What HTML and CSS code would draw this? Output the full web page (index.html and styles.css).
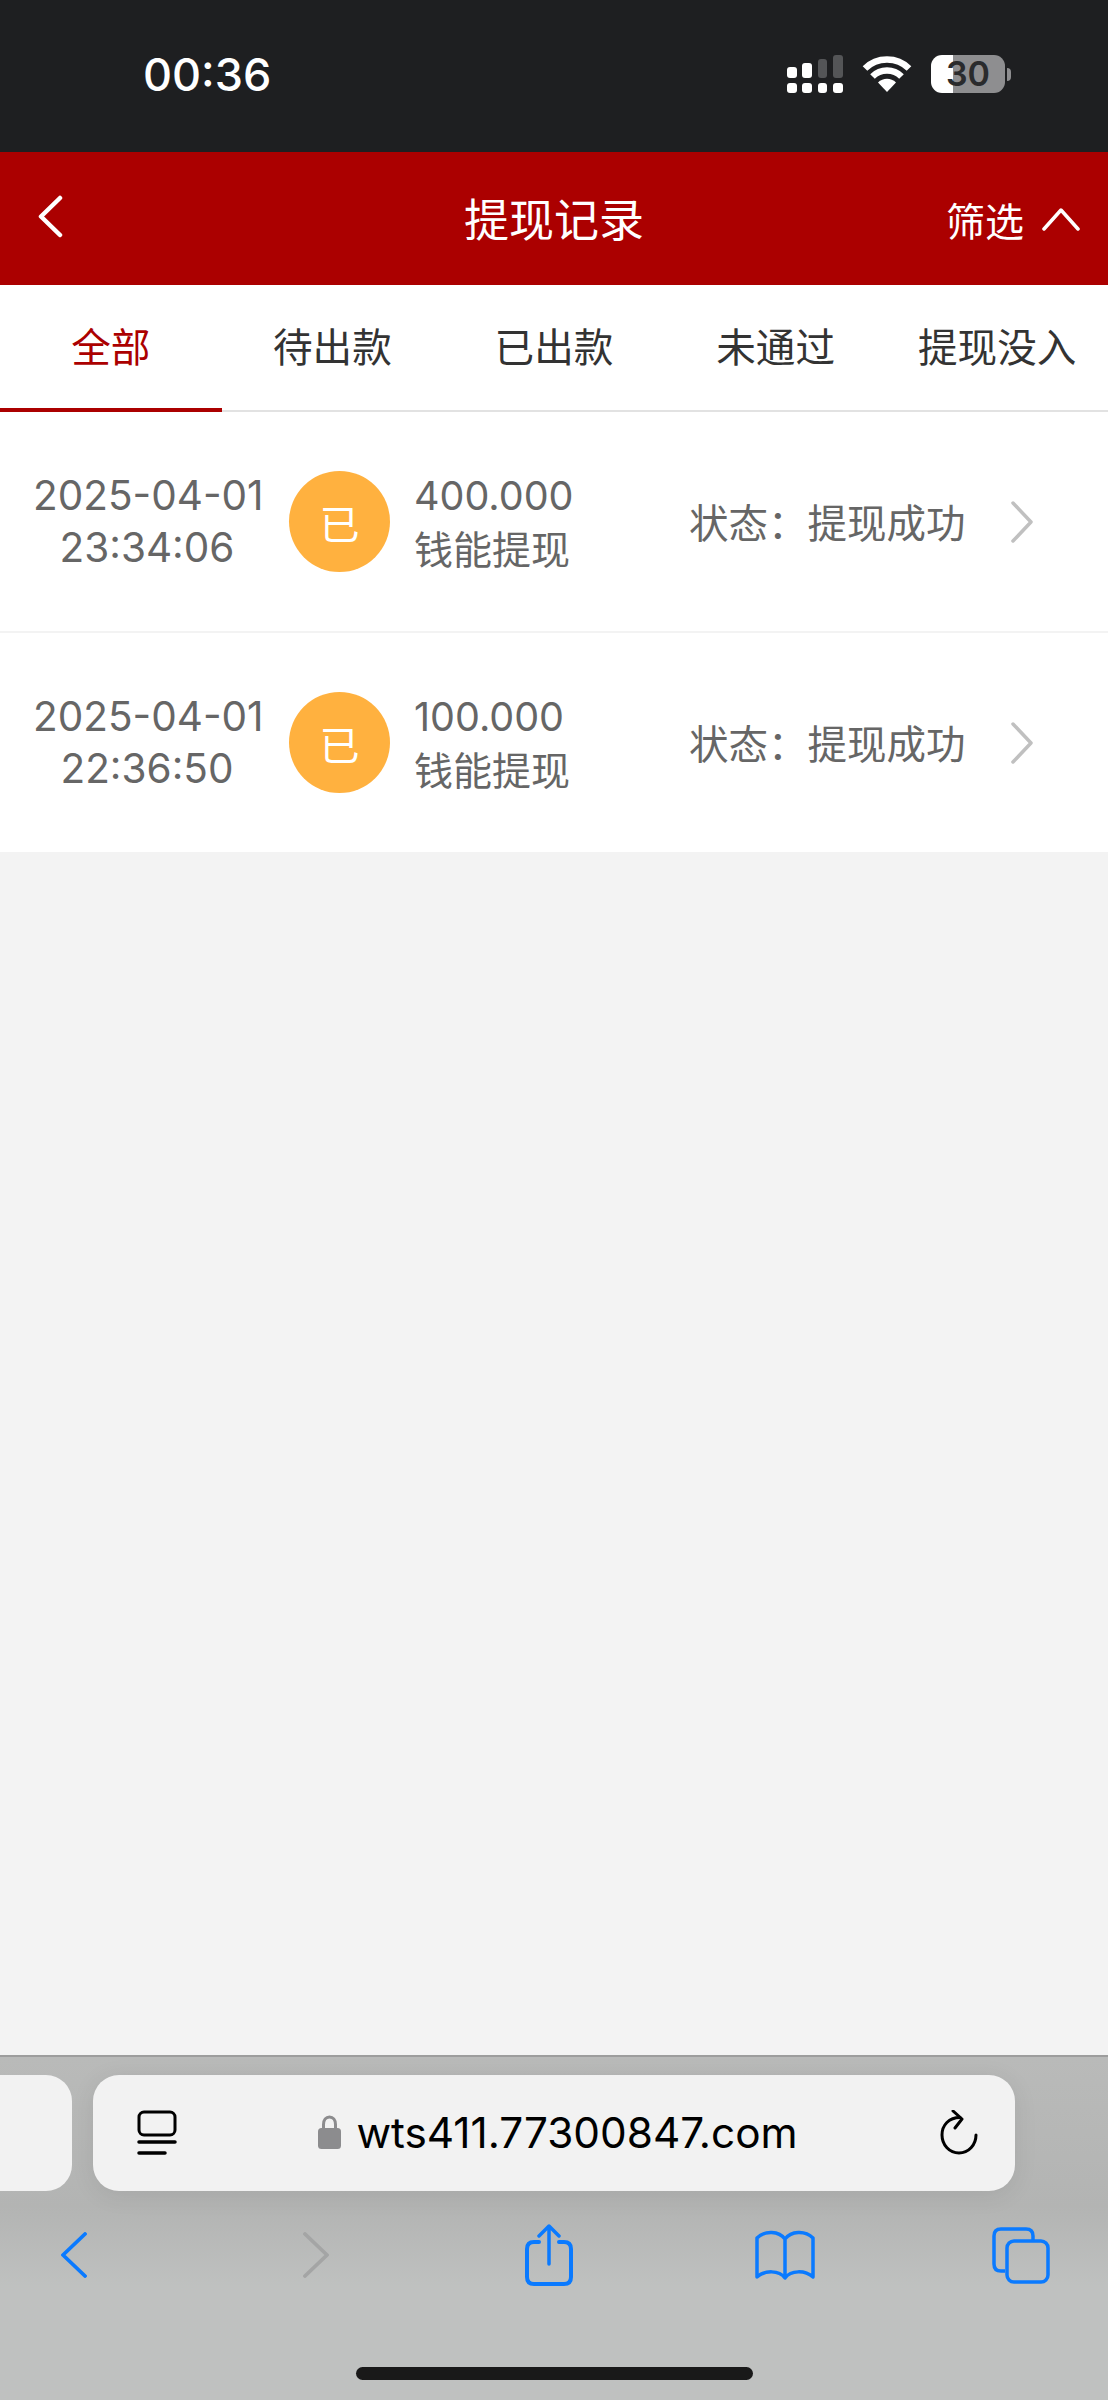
FILE: index.html
```html
<!DOCTYPE html>
<html lang="zh">
<head>
<meta charset="utf-8">
<title>提现记录</title>
<link rel="stylesheet" href="styles.css">
</head>
<body>
<div class="screen">
  <div class="status">
    <span class="clock">00:36</span>
    <div class="status-icons">
      <svg class="signal" width="56" height="38" viewBox="0 0 56 38">
        <g fill="#fff"><rect x="0" y="12" width="10" height="11" rx="3"/><rect x="15" y="8" width="10" height="15" rx="3"/></g>
        <g fill="#545557"><rect x="31" y="4" width="9" height="19" rx="3"/><rect x="46" y="0" width="10" height="23" rx="3"/></g>
        <g fill="#fff"><rect x="0" y="28" width="10" height="10" rx="3"/><rect x="15" y="28" width="10" height="10" rx="3"/><rect x="31" y="28" width="9" height="10" rx="3"/><rect x="46" y="28" width="10" height="10" rx="3"/></g>
      </svg>
      <svg class="wifi" width="50" height="38" viewBox="0 0 50 38">
        <path d="M25 37 16 27.500C21 22.500 29 22.500 34 27.500Z" fill="#fff"/>
        <path d="M10.500 21.500C18.500 13.500 31.500 13.500 39.500 21.500" fill="none" stroke="#fff" stroke-width="6.500"/>
        <path d="M3 13.500C15 1.500 35 1.500 47 13.500" fill="none" stroke="#fff" stroke-width="6.500"/>
      </svg>
      <div class="battery">
        <div class="battery-body"><span class="battery-num">30</span></div>
        <span class="battery-cap"></span>
      </div>
    </div>
  </div>

  <header class="navbar">
    <svg class="nav-back" width="30" height="44" viewBox="0 0 30 44"><path d="M24 3 5 21.500 24 40" fill="none" stroke="#fff" stroke-width="4.500" stroke-linecap="round" stroke-linejoin="round"/></svg>
    <h1 class="nav-title">提现记录</h1>
    <div class="nav-filter">
      <span>筛选</span>
      <svg width="38" height="24" viewBox="0 0 38 24"><path d="M2 22 19 3 36 22" fill="none" stroke="#fff" stroke-width="3.500" stroke-linecap="round" stroke-linejoin="round"/></svg>
    </div>
  </header>

  <nav class="tabs">
    <a class="tab active">全部</a>
    <a class="tab">待出款</a>
    <a class="tab">已出款</a>
    <a class="tab">未通过</a>
    <a class="tab">提现没入</a>
  </nav>

  <section class="list">
    <article class="row">
      <div class="when"><div>2025-04-01</div><div>23:34:06</div></div>
      <div class="badge">已</div>
      <div class="info"><div class="amount">400.000</div><div>钱能提现</div></div>
      <div class="state">状态：提现成功</div>
      <svg class="chev" width="24" height="42" viewBox="0 0 24 42"><path d="M3 2 21 21 3 40" fill="none" stroke="#c0c0c0" stroke-width="3.500" stroke-linecap="round" stroke-linejoin="round"/></svg>
    </article>
    <article class="row">
      <div class="when"><div>2025-04-01</div><div>22:36:50</div></div>
      <div class="badge">已</div>
      <div class="info"><div class="amount">100.000</div><div>钱能提现</div></div>
      <div class="state">状态：提现成功</div>
      <svg class="chev" width="24" height="42" viewBox="0 0 24 42"><path d="M3 2 21 21 3 40" fill="none" stroke="#c0c0c0" stroke-width="3.500" stroke-linecap="round" stroke-linejoin="round"/></svg>
    </article>
  </section>

  <div class="spacer"></div>

  <div class="safari">
    <div class="url-row">
      <div class="pill-prev"></div>
      <div class="pill">
        <svg class="reader" width="40" height="46" viewBox="0 0 40 46">
          <rect x="2" y="2" width="36" height="23" rx="5" fill="none" stroke="#000" stroke-width="3"/>
          <path d="M2 33H38M2 44H28" stroke="#000" stroke-width="3.500" stroke-linecap="round" transform="translate(0,-1)"/>
        </svg>
        <div class="address">
          <svg width="23" height="34" viewBox="0 0 23 34">
            <path d="M5.500 15V9.500C5.500 5 8 2 11.500 2S17.500 5 17.500 9.500V15" fill="none" stroke="#8c8c8e" stroke-width="3"/>
            <rect x="0" y="13" width="23" height="21" rx="3.500" fill="#8c8c8e"/>
          </svg>
          <span class="domain">wts411.77300847.com</span>
        </div>
        <svg class="reload" width="40" height="46" viewBox="0 0 40 46">
          <path d="M21 7.500C10 7.500 3 15 3 25S10.500 43 20 43 37 35 37 25" fill="none" stroke="#000" stroke-width="3" stroke-linecap="round"/>
          <path d="M14 1 23 9 16 18" fill="none" stroke="#000" stroke-width="3" stroke-linecap="round" stroke-linejoin="round"/>
        </svg>
      </div>
    </div>
    <div class="toolbar">
      <svg class="tool-back" width="26" height="46" viewBox="0 0 26 46"><path d="M24 2 2 23 24 44" fill="none" stroke="#0a7aff" stroke-width="3.800" stroke-linecap="round" stroke-linejoin="round"/></svg>
      <svg class="tool-forward" width="26" height="46" viewBox="0 0 26 46"><path d="M2 2 24 23 2 44" fill="none" stroke="#a4a5a5" stroke-width="3.800" stroke-linecap="round" stroke-linejoin="round"/></svg>
      <svg class="tool-share" width="48" height="62" viewBox="0 0 48 62">
        <path d="M14 18H9C4.500 18 2 20.500 2 25V53C2 57.500 4.500 60 9 60H39C43.500 60 46 57.500 46 53V25C46 20.500 43.500 18 39 18H34" fill="none" stroke="#0a7aff" stroke-width="4" stroke-linecap="round"/>
        <path d="M24 40V2M14 12 24 2 34 12" fill="none" stroke="#0a7aff" stroke-width="3.500" stroke-linecap="round" stroke-linejoin="round"/>
      </svg>
      <svg class="tool-book" width="60" height="50" viewBox="0 0 60 50">
        <path d="M30 9C24 1 10 0 2 8V47C10 40 24 40 30 48C36 40 50 40 58 47V8C50 0 36 1 30 9V47" fill="none" stroke="#0a7aff" stroke-width="3.500" stroke-linecap="round" stroke-linejoin="round"/>
      </svg>
      <svg class="tool-tabs" width="58" height="57" viewBox="0 0 58 57">
        <path d="M13 44H9C4.500 44 2 41.500 2 37V9C2 4.500 4.500 2 9 2H34C38.500 2 41 4.500 41 9V14" fill="none" stroke="#0a7aff" stroke-width="3.500"/>
        <rect x="15" y="14" width="41" height="41" rx="7" fill="none" stroke="#0a7aff" stroke-width="3.500"/>
      </svg>
    </div>
    <div class="home-row"><span class="home-bar"></span></div>
  </div>
</div>
</body>
</html>
```

FILE: styles.css
```css
* { box-sizing: border-box; }
html, body { margin: 0; padding: 0; }
body { font-family: Inter, "Noto Sans CJK SC", sans-serif; }

.screen {
  width: 1108px;
  height: 2400px;
  display: flex;
  flex-direction: column;
  background: #f3f3f3;
  overflow: hidden;
}

/* status bar */
.status {
  height: 152px;
  background: #1e1f21;
  display: flex;
  align-items: flex-start;
  justify-content: space-between;
  padding: 48px 97px 0 143px;
  color: #fff;
}
.clock { font: 500 45px/54px Inter, sans-serif; }
.status-icons { display: flex; align-items: flex-start; gap: 19px; padding-top: 7px; }
.signal, .wifi { display: block; }
.battery { display: flex; align-items: center; gap: 2px; }
.battery-body {
  width: 74px;
  height: 38px;
  border-radius: 11px;
  background: linear-gradient(90deg, #fff 0 30%, #8e8e90 30% 100%);
  display: flex;
  align-items: center;
  justify-content: center;
}
.battery-num { font: 600 34px/38px Inter, sans-serif; color: #2a2b2d; }
.battery-cap { width: 4px; height: 13px; border-radius: 0 6px 6px 0; background: #8e8e90; }

/* navbar */
.navbar {
  height: 133px;
  background: #ab0000;
  color: #fff;
  display: grid;
  grid-template-columns: 1fr auto 1fr;
  align-items: center;
  padding: 0 28px;
}
.nav-back { grid-column: 1; grid-row: 1; margin: 0 0 4px 8px; }
.nav-title { margin: 0 0 2px; font: 400 45px/60px "Noto Sans CJK SC", sans-serif; grid-column: 2; }
.nav-filter { grid-column: 3; justify-self: end; display: flex; align-items: center; gap: 18px; font: 400 39px/56px "Noto Sans CJK SC", sans-serif; }

/* tabs */
.tabs {
  height: 127px;
  background: #fff;
  display: grid;
  grid-template-columns: repeat(5, 1fr);
  border-bottom: 2px solid #e2e2e2;
}
.tab {
  display: flex;
  align-items: center;
  justify-content: center;
  padding-bottom: 4px;
  font: 400 39.600px/56px "Noto Sans CJK SC", sans-serif;
  color: #333;
  border-bottom: 4px solid transparent;
  margin-bottom: -2px;
}
.tab.active { color: #ab0000; border-bottom-color: #ab0000; }

/* list */
.list { background: #fff; }
.row {
  height: 221px;
  display: flex;
  align-items: center;
  padding-left: 33px;
  color: #666;
  border-bottom: 2px solid #f3f3f3;
}
.row:last-child { height: 219px; border-bottom: 0; }
.when { width: 228px; text-align: center; font: 400 40.500px/52px Inter, sans-serif; flex: none; white-space: nowrap; }
.badge {
  width: 101px;
  height: 101px;
  margin-left: 28px;
  border-radius: 50%;
  background: #ffb13f;
  color: #fff;
  display: flex;
  align-items: center;
  justify-content: center;
  font: 400 40px/1 "Noto Sans CJK SC", sans-serif;
  flex: none;
}
.info { margin-left: 24px; width: 275px; font: 400 39px/51px "Noto Sans CJK SC", sans-serif; flex: none; }
.amount { font: 400 39.500px/52px Inter, sans-serif; }
.state { width: 321px; font: 400 39.500px/56px "Noto Sans CJK SC", sans-serif; flex: none; white-space: nowrap; position: relative; top: -1px; }
.chev { flex: none; }

.spacer { flex: 1; }

/* safari chrome */
.safari {
  height: 345px;
  background: linear-gradient(180deg, #b9bab9 0, #b3b4b3 150px, #bfc1c0 230px);
  border-top: 2px solid #9d9d9d;
  display: flex;
  flex-direction: column;
}
.url-row { display: flex; gap: 21px; padding-top: 18px; }
.pill-prev {
  width: 72px;
  height: 116px;
  border-radius: 0 26px 26px 0;
  background: #f2f2f2;
}
.pill {
  width: 922px;
  height: 116px;
  border-radius: 26px;
  background: #f2f2f2;
  box-shadow: 0 4px 24px rgba(0,0,0,.08);
  display: flex;
  align-items: center;
  justify-content: space-between;
  padding: 0 36px 0 44px;
}
.address { display: flex; align-items: center; gap: 15px; }
.address svg { margin-bottom: 3px; }
.domain { font: 400 42.300px/56px Inter, sans-serif; color: #000; }
.reader, .reload { display: block; flex: none; }

.toolbar {
  display: flex;
  align-items: center;
  height: 66px;
  margin-top: 31px;
  padding-left: 61px;
}
.toolbar svg { display: block; flex: none; }
.tool-forward { margin-left: 216px; }
.tool-share { margin-left: 196px; }
.tool-book { margin-left: 182px; }
.tool-tabs { margin-left: 177px; }
.home-row { display: flex; justify-content: center; margin-top: 79px; }
.home-bar { width: 397px; height: 13px; border-radius: 7px; background: #191919; }
```
